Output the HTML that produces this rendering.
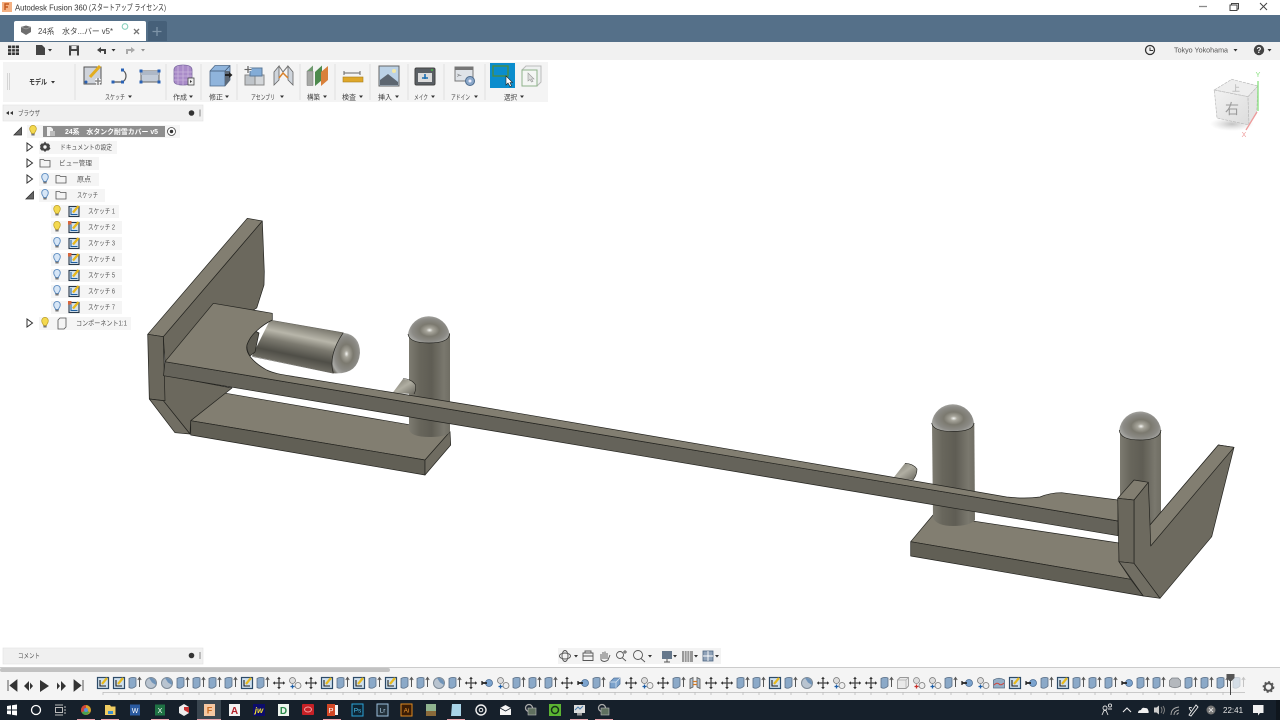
<!DOCTYPE html>
<html><head><meta charset="utf-8"><style>
html,body{margin:0;padding:0;background:#fff;width:1280px;height:720px;overflow:hidden}
svg{display:block;filter:blur(.3px)}
text{font-family:"Liberation Sans","Noto Sans CJK JP",sans-serif}
.l{font-size:7px;fill:#444}
.b{font-size:7px;fill:#555}
</style></head><body>
<svg width="1280" height="720" viewBox="0 0 1280 720" xmlns="http://www.w3.org/2000/svg">
<defs>
<linearGradient id="cv" x1="0" x2="1" y1="0" y2="0"><stop offset="0" stop-color="#7d7b71"/><stop offset=".25" stop-color="#68665c"/><stop offset=".55" stop-color="#5f5d54"/><stop offset=".85" stop-color="#7a786e"/><stop offset="1" stop-color="#6f6d63"/></linearGradient>
<linearGradient id="ch" gradientUnits="userSpaceOnUse" x1="344" y1="331" x2="335" y2="374"><stop offset="0" stop-color="#6f6d63"/><stop offset=".32" stop-color="#b8b6aa"/><stop offset=".52" stop-color="#7c7a70"/><stop offset=".78" stop-color="#4f4e47"/><stop offset="1" stop-color="#706e65"/></linearGradient>
<linearGradient id="pg" x1="0" y1="0" x2="1" y2="1"><stop offset="0" stop-color="#77756b"/><stop offset=".5" stop-color="#b0aea2"/><stop offset="1" stop-color="#68665d"/></linearGradient>
<radialGradient id="dome" cx=".52" cy=".52" r=".62"><stop offset="0" stop-color="#f6f6f3"/><stop offset=".13" stop-color="#a8a69c"/><stop offset=".38" stop-color="#7b796f"/><stop offset=".68" stop-color="#8c8b86"/><stop offset=".88" stop-color="#aaaaa6"/><stop offset="1" stop-color="#6c6a62"/></radialGradient>
<linearGradient id="cube" x1="0" y1="0" x2="1" y2="1"><stop offset="0" stop-color="#f2f2f2"/><stop offset="1" stop-color="#dcdcdc"/></linearGradient>
<radialGradient id="shad"><stop offset="0" stop-color="#999" stop-opacity=".6"/><stop offset="1" stop-color="#bbb" stop-opacity="0"/></radialGradient>

<g id="S"><rect x="-5.500" y="-5.500" width="11" height="11" fill="#cfe0ee" stroke="#2d4b68" stroke-width="1.200"/><path d="M-3-3V3H3" fill="none" stroke="#222" stroke-width="1.100"/><path d="M-1 1L4-5" stroke="#e8b91c" stroke-width="2.200"/></g>
<g id="E"><path d="M-6-4.500Q-2.500-6.500 1-5V3Q-2.500 6.500-6 4.500Z" fill="#8ba9c8" stroke="#5b6f86" stroke-width=".8"/><path d="M4.500 4V-5M2.800-3L4.500-5.500 6.200-3" fill="none" stroke="#555" stroke-width="1"/></g>
<g id="R"><circle r="5.500" fill="#b9c4d0" stroke="#7e8a96"/><path d="M-2-5A6 6 0 0 1 5 2L1-.5Z" fill="#6f93b8"/></g>
<g id="M"><path d="M0-5.500V5.500M-5.500 0H5.500" stroke="#444" stroke-width="1.300"/><path d="M-1.800-4L0-6.200 1.800-4ZM-1.800 4L0 6.200 1.800 4ZM-4-1.800L-6.200 0-4 1.800ZM4-1.800L6.200 0 4 1.800Z" fill="#333"/></g>
<g id="J"><circle cx="-2.500" cy="-2.500" r="3" fill="#ddd" stroke="#777" stroke-width=".8"/><circle cx="3" cy="2.500" r="3" fill="#eee" stroke="#777" stroke-width=".8"/><path d="M-2.500 1.500V5.500M-4.500 3.500H-.5" stroke="#1f5fa8" stroke-width="1.300"/></g>
<g id="JR"><circle cx="-2.500" cy="-2.500" r="3" fill="#ddd" stroke="#888" stroke-width=".8"/><circle cx="3" cy="2.500" r="3" fill="#eee" stroke="#777" stroke-width=".8"/><path d="M-2.500 1.500V5.500M-4.500 3.500H-.5" stroke="#c8322c" stroke-width="1.300"/></g>
<g id="P"><circle cx="2" r="3.500" fill="#7ca4cf" stroke="#4a6c92" stroke-width=".8"/><path d="M-5 0H0" stroke="#222" stroke-width="1.800"/><path d="M-5-2V2" stroke="#222" stroke-width="1.300"/></g>
<g id="B"><path d="M-5-1L-1-5H5V1L1 5H-5Z" fill="#7ba2cc" stroke="#54749a" stroke-width=".8"/><path d="M-5-1H1L5-5M1-1V5" fill="none" stroke="#dde8f2" stroke-width=".7"/></g>
<g id="A"><path d="M-5-4L-2-5.500V4L-5 5.500ZM5-4L2-5.500V4L5 5.500Z" fill="#b5c2cf" stroke="#555" stroke-width=".8"/><path d="M-2-1.500H2M-2 1.500H2" stroke="#d07a26" stroke-width="1.200"/></g>
<g id="W"><path d="M-5.500-3L-3-5.500H5.500V3L3 5.500H-5.500Z" fill="#e9e9e9" stroke="#999" stroke-width=".9"/><path d="M-5.500-3H3V5.500M3-3L5.500-5.500" fill="none" stroke="#aaa" stroke-width=".7"/></g>
<g id="G"><path d="M-5.500-2.500L-3-5H3L5.500-2.500V3Q0 6.500-5.500 3Z" fill="#b4b8bd" stroke="#7b7f84" stroke-width=".8"/></g>
<g id="F"><path d="M-5.500-3Q0-6.500 5.500-3V5H-5.500Z" fill="#94aec6" stroke="#5b6f86" stroke-width=".8"/><path d="M-5 2Q-2-1 0 1T5 0" fill="none" stroke="#d0433a" stroke-width="1"/></g>

<g id="bY"><path d="M-3.200-1.500A3.300 3.300 0 1 1 3.200-1.500C3.200 0 1.600 1 1.500 2.500H-1.500C-1.600 1-3.200 0-3.200-1.500Z" fill="#f4d94f" stroke="#b99a1f" stroke-width=".7"/><rect x="-1.600" y="2.700" width="3.200" height="1.800" fill="#777"/></g>
<g id="bB"><path d="M-3.200-1.500A3.300 3.300 0 1 1 3.200-1.500C3.200 0 1.600 1 1.500 2.500H-1.500C-1.600 1-3.200 0-3.200-1.500Z" fill="#d7e6f6" stroke="#5d8cc0" stroke-width=".9"/><rect x="-1.600" y="2.700" width="3.200" height="1.800" fill="#777"/></g>
<g id="fd"><path d="M-5-3.500H-1.500L-.5-2.500H5V4H-5Z" fill="#f4f4f4" stroke="#555" stroke-width=".8"/></g>
<g id="sk"><rect x="-5" y="-4.500" width="10" height="10" fill="#d5e3ef" stroke="#27384a" stroke-width="1.100"/><path d="M-3-3V3.500H3.500" fill="none" stroke="#1f5f9f" stroke-width="1"/><path d="M-1 1.500L4.500-5" stroke="#e9b81b" stroke-width="2.300"/></g>
<g id="sk2"><use href="#sk"/><rect x="-6" y="-6" width="3.500" height="3.500" fill="#d9653a"/></g>
<path id="tr" d="M-2.500-4V4L3 0Z" fill="#fff" stroke="#333" stroke-width="1"/>
<path id="tc" d="M-4 3.500H3.500V-4Z" fill="#666" stroke="#333" stroke-width=".8"/>
<path id="car" d="M-2-1H2L0 1.500Z" fill="#333"/>
</defs>

<!-- title bar -->
<rect width="1280" height="15" fill="#fff"/>
<rect x="2" y="2" width="10" height="10" fill="#f4b183"/><path d="M5 10V4H9M5 7H8" stroke="#c4581d" stroke-width="1.400" fill="none"/>
<text x="15" y="10.500" font-size="8.300" fill="#333" textLength="72" lengthAdjust="spacingAndGlyphs">Autodesk Fusion 360</text>
<text x="89" y="10.500" font-size="8.300" fill="#333" textLength="77" lengthAdjust="spacingAndGlyphs">(スタートアップ ライセンス)</text>
<path d="M1199 6.500H1207" stroke="#8a8a8a" stroke-width="1.300"/>
<path d="M1230 5H1237V10.500H1230ZM1231.500 5V3.500H1238.500V9H1237" fill="none" stroke="#444" stroke-width="1"/>
<path d="M1260 3L1267 10M1267 3L1260 10" stroke="#444" stroke-width="1"/>

<!-- tab bar -->
<rect y="15" width="1280" height="27" fill="#557089"/>
<path d="M14 41V23Q14 21 16 21H144Q146 21 146 23V41Z" fill="#fff"/>
<path d="M148 41V23Q148 21 150 21H165Q167 21 167 23V41Z" fill="#466079"/>
<path d="M157 27V36M152.500 31.500H161.500" stroke="#7e94a8" stroke-width="1.300"/>
<path d="M21 27L26 25.500 31 27V32L26 35 21 32Z" fill="#6e6e6e"/><path d="M21 27L26 29 31 27" stroke="#a0a0a0" fill="none" stroke-width=".7"/>
<text x="38" y="34" font-size="8" fill="#444" textLength="75" lengthAdjust="spacingAndGlyphs">24系　水タ...バー v5*</text>
<circle cx="125" cy="26.500" r="2.800" fill="none" stroke="#88d0bd" stroke-width="1.100"/>
<path d="M134 29L139 34M139 29L134 34" stroke="#777" stroke-width="1.300"/>

<!-- quick access -->
<rect y="42" width="1280" height="18" fill="#f1f1f1"/>
<path d="M8 45.500H19V55H8Z" fill="#333"/><path d="M11.700 45V56M15.300 45V56M8 48.700H19M8 52H19" stroke="#f1f1f1" stroke-width=".8"/>
<path d="M36 45H42L45 48V55H36Z" fill="#444"/><use href="#car" x="50" y="50"/>
<path d="M69 45.500H79V55.500H69Z" fill="#444"/><rect x="71.500" y="46" width="5" height="3" fill="#e8e8e8"/><rect x="71" y="51" width="6" height="4.500" fill="#e8e8e8"/>
<path d="M97 50L101 47V49H106V54H104V51H101V53Z" fill="#444"/><use href="#car" x="113.500" y="50"/>
<path d="M135 50L131 47V49H126V54H128V51H131V53Z" fill="#aaa"/><use href="#car" x="143" y="50" opacity=".5"/>
<circle cx="1150" cy="50" r="4.500" fill="none" stroke="#333" stroke-width="1.300"/><path d="M1150 47.500V50.500H1153" fill="none" stroke="#333" stroke-width="1"/>
<text x="1174" y="52.500" font-size="7.300" fill="#555" textLength="54" lengthAdjust="spacingAndGlyphs">Tokyo Yokohama</text><use href="#car" x="1235.500" y="50"/>
<circle cx="1259" cy="50" r="5.200" fill="#444"/><text x="1259" y="53" font-size="8" fill="#fff" font-weight="bold" text-anchor="middle">?</text><use href="#car" x="1269.500" y="50"/>

<!-- toolbar -->
<rect x="3" y="62" width="545" height="40" fill="#f4f4f4"/>
<path d="M7.500 73V90M9.500 73V90" stroke="#ccc" stroke-width=".8"/>
<text x="29" y="84.500" font-size="7.300" fill="#333" font-weight="bold" textLength="18" lengthAdjust="spacingAndGlyphs">モデル</text><use href="#car" x="53" y="82"/>
<g stroke="#e0e0e0" stroke-width="1"><path d="M75 64V100M166 64V100M201 64V100M237 64V100M300 64V100M335 64V100M370 64V100M408 64V100M444 64V100M485 64V100"/></g>
<!-- sketch -->
<rect x="84" y="67" width="17" height="17" fill="#cfd3da" stroke="#555" stroke-width="1"/><path d="M90 77L100 66" stroke="#e3ad1f" stroke-width="3"/><circle cx="86" cy="82" r="1.500" fill="#2a62b5"/><path d="M95 81H101M98 78V85" stroke="#fff" stroke-width="3.500"/><path d="M95 81H101M98 78V85" stroke="#888" stroke-width="1.600"/>
<path d="M113 82H122A6.500 6.500 0 0 0 122 70" fill="none" stroke="#555" stroke-width="1.200"/><rect x="111.500" y="80.500" width="3" height="3" fill="#2a62b5"/><rect x="121" y="80.500" width="3" height="3" fill="#2a62b5"/><rect x="121" y="68.500" width="3" height="3" fill="#2a62b5"/>
<rect x="141" y="71" width="18" height="11" fill="#c3ccd8" stroke="#666"/><rect x="141" y="71" width="18" height="4" fill="#aeb8c6"/><rect x="139.500" y="69.500" width="3" height="3" fill="#2a62b5"/><rect x="157.500" y="69.500" width="3" height="3" fill="#2a62b5"/><rect x="139.500" y="80.500" width="3" height="3" fill="#2a62b5"/><rect x="157.500" y="80.500" width="3" height="3" fill="#2a62b5"/>
<!-- create -->
<path d="M174 70Q174 65 183 65Q192 65 192 70V81Q192 85 183 85Q174 85 174 81Z" fill="#a98bc8" stroke="#7c6aa0" stroke-width=".8"/><path d="M174 72H192M174 76H192M174 80H192M178 66V85M183 65V85M188 66V85" stroke="#c9b5dc" stroke-width=".8"/><rect x="188" y="78" width="6" height="7" fill="#eee" stroke="#444" stroke-width=".8"/><path d="M190 80L192 81.500 190 83Z" fill="#333"/>
<!-- modify -->
<path d="M210 71L215 65.500H230V80L225 86H210Z" fill="#8fb4dc" stroke="#4f6a89" stroke-width=".8"/><path d="M210 71H225V86M225 71L230 65.500" fill="none" stroke="#3d5470" stroke-width=".7"/><path d="M225 71H230V80L225 86Z" fill="#5e6a78"/><path d="M225 74H229V72L232.500 75 229 78V76H225Z" fill="#222"/>
<!-- assembly -->
<rect x="245" y="75" width="10" height="10" fill="#bfc4c9" stroke="#888"/><rect x="255" y="75" width="9" height="10" fill="#d4d7da" stroke="#888"/><rect x="250" y="68" width="12" height="8" fill="#83acd7" stroke="#5c7a99"/><path d="M248 66V73M244.500 69.500H251.500" stroke="#fff" stroke-width="3"/><path d="M248 66V73M244.500 69.500H251.500" stroke="#666" stroke-width="1.300"/>
<path d="M274 72L279 66V80L274 85ZM293 72L288 66V80L293 85Z" fill="#cfd5dc" stroke="#666" stroke-width=".8"/><path d="M279 66L283 72 288 66" fill="none" stroke="#777"/><path d="M279 78L283 73 288 78" fill="none" stroke="#d9822b" stroke-width="1.500"/>
<!-- construct -->
<path d="M307 71H313V85.500H307Z" fill="#a7a9a6" stroke="#777" stroke-width=".5"/><path d="M307 71L313 65.500V71Z" fill="#6f9a6f"/><path d="M315 72L322 65.500V80L315 86Z" fill="#4d8a4d"/><path d="M321 72L328 66V80L321 86Z" fill="#d9803a"/>
<!-- inspect -->
<path d="M344 71V75M360 71V75M344 73H360" stroke="#666" stroke-width="1"/><rect x="343" y="77" width="20" height="5" fill="#dfa72a" stroke="#a97f1c" stroke-width=".6"/>
<!-- insert -->
<rect x="379" y="66" width="20" height="20" fill="#bcd2e6" stroke="#666"/><path d="M380 85V80L388 74 398 82V85Z" fill="#5d6670"/><circle cx="394" cy="71" r="2" fill="#f2e7a6"/>
<!-- make -->
<rect x="415" y="68" width="20" height="17" rx="1.500" fill="#5a5f64" stroke="#444"/><rect x="418" y="73" width="14" height="9" fill="#dcdcdc"/><path d="M425 74V79M422 78H428" stroke="#1c6fb2" stroke-width="1.600"/><rect x="431" y="69" width="2" height="2" fill="#4aa14a"/>
<!-- addin -->
<rect x="455" y="67" width="18" height="14" fill="#dfe3e8" stroke="#777"/><rect x="455" y="67" width="18" height="3" fill="#777"/><text x="457" y="77" font-size="5" fill="#444">&gt;-</text><circle cx="470" cy="81" r="4.500" fill="#8aa7c9" stroke="#4c6a8d"/><circle cx="470" cy="81" r="1.500" fill="#eef"/>
<!-- select -->
<rect x="490" y="63" width="25" height="25" fill="#0b8dcd"/><rect x="493" y="66" width="15" height="10" fill="none" stroke="#4e8b3c" stroke-width="1.300"/><path d="M506 76V85L508 83 510 86.500 511.500 86 510 82.500H512.500Z" fill="#fff" stroke="#222" stroke-width=".6"/>
<path d="M522 70L526 66H541V82L537 86H522Z" fill="#eef0f0" stroke="#bbb"/><rect x="522" y="70" width="15" height="16" fill="#f4f6f4" stroke="#8eb28a"/><path d="M528 73V81L530 79.500 531.500 82 533 81.500 531.500 79H534Z" fill="#ddd" stroke="#999" stroke-width=".6"/>
<text class="l" x="105" y="99.500" textLength="20" lengthAdjust="spacingAndGlyphs">スケッチ</text><use href="#car" x="130" y="96.500"/>
<text class="l" x="173" y="99.500" textLength="14" lengthAdjust="spacingAndGlyphs">作成</text><use href="#car" x="191" y="96.500"/>
<text class="l" x="209" y="99.500" textLength="14" lengthAdjust="spacingAndGlyphs">修正</text><use href="#car" x="227" y="96.500"/>
<text class="l" x="251" y="99.500" textLength="24" lengthAdjust="spacingAndGlyphs">アセンブリ</text><use href="#car" x="282" y="96.500"/>
<text class="l" x="307" y="99.500" textLength="13" lengthAdjust="spacingAndGlyphs">構築</text><use href="#car" x="325" y="96.500"/>
<text class="l" x="342" y="99.500" textLength="14" lengthAdjust="spacingAndGlyphs">検査</text><use href="#car" x="361" y="96.500"/>
<text class="l" x="378" y="99.500" textLength="14" lengthAdjust="spacingAndGlyphs">挿入</text><use href="#car" x="397" y="96.500"/>
<text class="l" x="414" y="99.500" textLength="14" lengthAdjust="spacingAndGlyphs">メイク</text><use href="#car" x="433" y="96.500"/>
<text class="l" x="451" y="99.500" textLength="19" lengthAdjust="spacingAndGlyphs">アドイン</text><use href="#car" x="476" y="96.500"/>
<text class="l" x="504" y="99.500" textLength="13" lengthAdjust="spacingAndGlyphs">選択</text><use href="#car" x="522" y="96.500"/>

<!-- browser header -->
<rect x="3" y="105" width="200" height="16" fill="#f0f0f0" stroke="#e2e2e2" stroke-width=".6"/>
<path d="M9 111V115L6 113ZM13 111V115L10 113Z" fill="#333"/>
<text class="b" x="18" y="115.500" textLength="22" lengthAdjust="spacingAndGlyphs">ブラウザ</text>
<circle cx="191.500" cy="113" r="2.800" fill="#333"/><path d="M200 109.500V116.500" stroke="#bbb" stroke-width="2"/>

<!-- browser tree -->
<g fill="#f5f5f5">
<rect x="27" y="125" width="153" height="13"/><rect x="39" y="141" width="78" height="13"/><rect x="39" y="157" width="60" height="13"/><rect x="39" y="173" width="60" height="13"/><rect x="39" y="189" width="66" height="13"/>
<rect x="51" y="205" width="68" height="13"/><rect x="51" y="221" width="71" height="13"/><rect x="51" y="237" width="71" height="13"/><rect x="51" y="253" width="71" height="13"/><rect x="51" y="269" width="71" height="13"/><rect x="51" y="285" width="71" height="13"/><rect x="51" y="301" width="71" height="13"/><rect x="39" y="317" width="92" height="13"/>
</g>
<use href="#tc" x="18" y="131.500"/><use href="#bY" x="33" y="131"/>
<rect x="43" y="126" width="122" height="11" fill="#8e8e8e"/><path d="M47 127H51L53 129V136H47Z" fill="#f0f0f0"/><rect x="50" y="131" width="5" height="5" fill="#bbb"/>
<text x="65" y="134" font-size="7" fill="#fff" font-weight="bold" textLength="93" lengthAdjust="spacingAndGlyphs">24系　水タンク耐雪カバー v5</text>
<circle cx="171.500" cy="131.500" r="4" fill="#fff" stroke="#444" stroke-width=".8"/><circle cx="171.500" cy="131.500" r="1.700" fill="#333"/>

<use href="#tr" x="29.500" y="147"/>
<path d="M45 141.500L46.500 143.500H48.500L50 145.500 49.500 147 50.500 148.500 48.500 150.500H46.500L45 152 43.500 150.500H41.500L40 148.500 40.500 147 40 145.500 41.500 143.500H43.500Z" fill="#444"/><circle cx="45" cy="147" r="1.700" fill="#f5f5f5"/>
<text class="b" x="60" y="149.500" textLength="52" lengthAdjust="spacingAndGlyphs">ドキュメントの設定</text>
<use href="#tr" x="29.500" y="163"/><use href="#fd" x="45" y="163"/><text class="b" x="59" y="165.500" textLength="33" lengthAdjust="spacingAndGlyphs">ビュー管理</text>
<use href="#tr" x="29.500" y="179"/><use href="#bB" x="45" y="179"/><use href="#fd" x="61" y="179"/><text class="b" x="77" y="181.500" textLength="14" lengthAdjust="spacingAndGlyphs">原点</text>
<use href="#tc" x="30" y="195.500"/><use href="#bB" x="45" y="195"/><use href="#fd" x="61" y="195"/><text class="b" x="77" y="197.500" textLength="21" lengthAdjust="spacingAndGlyphs">スケッチ</text>
<use href="#bY" x="57" y="211"/><use href="#sk" x="74" y="211"/><text class="b" x="88" y="213.500" textLength="27" lengthAdjust="spacingAndGlyphs">スケッチ 1</text>
<use href="#bY" x="57" y="227"/><use href="#sk2" x="74" y="227"/><text class="b" x="88" y="229.500" textLength="27" lengthAdjust="spacingAndGlyphs">スケッチ 2</text>
<use href="#bB" x="57" y="243"/><use href="#sk" x="74" y="243"/><text class="b" x="88" y="245.500" textLength="27" lengthAdjust="spacingAndGlyphs">スケッチ 3</text>
<use href="#bB" x="57" y="259"/><use href="#sk2" x="74" y="259"/><text class="b" x="88" y="261.500" textLength="27" lengthAdjust="spacingAndGlyphs">スケッチ 4</text>
<use href="#bB" x="57" y="275"/><use href="#sk" x="74" y="275"/><text class="b" x="88" y="277.500" textLength="27" lengthAdjust="spacingAndGlyphs">スケッチ 5</text>
<use href="#bB" x="57" y="291"/><use href="#sk" x="74" y="291"/><text class="b" x="88" y="293.500" textLength="27" lengthAdjust="spacingAndGlyphs">スケッチ 6</text>
<use href="#bB" x="57" y="307"/><use href="#sk2" x="74" y="307"/><text class="b" x="88" y="309.500" textLength="27" lengthAdjust="spacingAndGlyphs">スケッチ 7</text>
<use href="#tr" x="29.500" y="323"/><use href="#bY" x="45" y="323"/>
<path d="M58 320L60 318H66V327L64 329H58Z" fill="#f4f4f4" stroke="#555" stroke-width=".8"/>
<text class="b" x="76" y="325.500" textLength="51" lengthAdjust="spacingAndGlyphs">コンポーネント1:1</text>

<!-- MODEL -->
<g stroke="#23231f" stroke-width=".7" stroke-linejoin="round">
<!-- lower plates -->
<path d="M190.700 420.700L216.700 391.700 450 431.700 425 460Z" fill="#827e71"/>
<path d="M190.700 420.700L425 460 425 475 190.700 435Z" fill="#615f55"/>
<path d="M425 460L450 431.700 450.700 445 425 475Z" fill="#6f6c61"/>
<path d="M910.700 541.700L933 515 1119 543 1119 561.700 1130.700 579.300Z" fill="#827e71"/>
<path d="M910.700 541.700L1130.700 579.300 1143.300 596 910.700 556Z" fill="#615f55"/>
<!-- vertical capsules -->
<path d="M409 333V429Q410 437 430 437Q449 437 450 431V333Z" fill="url(#cv)" stroke="none"/>
<path d="M408 334A21 21 0 0 1 449.500 334Q449 343 429 343Q409 343 408 334Z" fill="url(#dome)" stroke="none"/>
<path d="M408 334Q409 343 429 343Q449 343 449.500 334" fill="none"/>
<path d="M932 423H974.300L975 520Q970 526 953 526Q937 526 933 518Z" fill="url(#cv)" stroke="none"/>
<path d="M931.700 423A21.300 21.300 0 0 1 974 423Q973 431.500 953 431.500Q933 431.500 931.700 423Z" fill="url(#dome)" stroke="none"/>
<path d="M931.700 423Q933 431.500 953 431.500Q973 431.500 974 423" fill="none"/>
<path d="M1120 430H1161V525H1120Z" fill="url(#cv)" stroke="none"/>
<path d="M1119.300 430A21 21 0 0 1 1161 430Q1160 440 1140 440Q1120 440 1119.300 430Z" fill="url(#dome)" stroke="none"/>
<path d="M1119.300 430Q1120 440 1140 440Q1160 440 1161 430" fill="none"/>
<!-- pegs -->
<path d="M392.500 393L403 379Q410 379 415.500 385 416 391 414 394Z" fill="url(#pg)" stroke="none"/>
<path d="M403 378.500Q412 379 415.500 385 416 391 414 394" fill="none" stroke-width=".6"/>
<path d="M893.300 478L905 463.300Q913 463.500 917 469 917 475 913 480Z" fill="url(#pg)" stroke="none"/>
<path d="M905 463.300Q913 463.500 917 469 917 475 913 480" fill="none" stroke-width=".6"/>
<!-- horizontal capsule -->
<path d="M270 320L343.300 332.700L333.300 373.300L252 356Z" fill="url(#ch)" stroke="none"/>
<path d="M270 320L343.300 332.700M252 356.500L333.300 373.300" fill="none" stroke="#45443d" stroke-width=".4"/>
<path d="M343.300 332.700Q360 335 360 353Q358 375 333.300 373.300Q328 355 343.300 332.700Z" fill="url(#dome)" stroke="none"/>
<path d="M343.300 332.700Q328 355 333.300 373.300" fill="none"/>
<!-- inside below bar -->
<path d="M163 375L232 388 190.700 420.700 190 434 163.300 400.700Z" fill="#6b685d"/>
<!-- upright plate -->
<path d="M262.300 221L264.300 271.700 264 285 256.700 308 165 361.700 163.300 336.700Z" fill="#6b685d"/>
<path d="M247.300 218.300L262.300 221 163.300 336.700 147.700 334.300Z" fill="#827e71"/>
<path d="M147.700 334.300L163.300 336.700 165 400.700 149.300 399Z" fill="#6a675c"/>
<path d="M149.300 399L163.300 400.700 190 434 175 432.700Z" fill="#716e63"/>
<!-- bar front (single piece) -->
<path d="M165 361.700L1118 521 1118 535.700 163.500 375.700Z" fill="#65635a"/>
<!-- bar/plate top (single piece) -->
<path d="M165 361.700L213.300 303.300 272.300 313.300 272.300 320C262 325 250 335 247 345 245 352 252 362 266.700 370 275 374 285 375 296.700 377L470 405 880 475 1006.700 497Q1025 499 1040 497 1050 492.700 1061.700 492.700L1118 500 1118 521Z" fill="#827e71"/>
<path d="M247 345C249 339 252 335 256 331.500L259 333 255 352 250 356C247.500 352 246.500 349 247 345Z" fill="#5d5b52"/>
<!-- right upright -->
<path d="M1134 500L1148.300 482.300 1150 525 1218.300 445 1234 447.300 1211.700 536.700 1160 598.300 1134 563.300Z" fill="#6d6a5f"/>
<path d="M1150 525L1218.300 445 1234 447.300 1150.700 546Z" fill="#827e71"/>
<path d="M1117.700 498.300L1134 480 1148.300 482.300 1134 500Z" fill="#827e71"/>
<path d="M1117.700 498.300L1134 500 1134 563.300 1119 561.700Z" fill="#6a675c"/>
<path d="M1119 561.700L1134 563.300 1160 598.300 1143.300 596Z" fill="#716e63"/>
</g>

<!-- nav cube -->
<ellipse cx="1232" cy="124" rx="22" ry="7" fill="url(#shad)"/>
<path d="M1214.300 90L1231.700 79.300 1258 86 1248 96.700Z" fill="#eee" stroke="#bbb" stroke-dasharray="3 1" stroke-width=".7"/>
<path d="M1214.300 90L1248 96.700 1249 125 1217 118Z" fill="url(#cube)" stroke="#bbb" stroke-dasharray="3 1" stroke-width=".7"/>
<path d="M1248 96.700L1258 86 1256.700 111.700 1249 125Z" fill="#e4e4e4" stroke="#bbb" stroke-dasharray="3 1" stroke-width=".7"/>
<text x="1232" y="114" font-size="14" fill="#999" text-anchor="middle">右</text>
<text x="1236" y="91" font-size="8" fill="#aaa" text-anchor="middle">上</text>
<path d="M1258 81V111" stroke="#86e07c" stroke-width="1.300"/><path d="M1257 112L1246 130" stroke="#ee9a9a" stroke-width="1.300"/>
<text x="1258" y="77" font-size="7" fill="#86e07c" text-anchor="middle">Y</text><text x="1244" y="137" font-size="7" fill="#ee9a9a" text-anchor="middle">X</text>

<!-- comment -->
<rect x="3" y="648" width="200" height="16" fill="#f0f0f0" stroke="#e2e2e2" stroke-width=".6"/>
<text class="b" x="18" y="658" textLength="22" lengthAdjust="spacingAndGlyphs">コメント</text>
<circle cx="191.500" cy="655.500" r="2.800" fill="#333"/><path d="M200 652V659" stroke="#bbb" stroke-width="2"/>

<!-- view bar -->
<rect x="558" y="648" width="163" height="16" fill="#f3f3f3"/>
<g fill="none" stroke="#555" stroke-width=".9">
<ellipse cx="565" cy="656" rx="5.500" ry="3"/><ellipse cx="565" cy="656" rx="3" ry="5.500"/>
<path d="M583 653H593V660.500H583ZM585 653V651H591V653M583 656H593"/>
<path d="M601 660V654M603 659V652M605 659V651.500M607 659V653M601 660Q604 663 608 660L610 655"/>
<circle cx="620" cy="655" r="3.500"/><path d="M622.500 658L626 661M625 650V654M623 652H627"/>
<circle cx="638" cy="655" r="4.500"/><path d="M641 658.500L645 662"/>
</g>
<use href="#car" x="576" y="656"/><use href="#car" x="650" y="656"/>
<rect x="662" y="651" width="10" height="8" fill="#66788c"/><path d="M667 659V662M664 662H670" stroke="#555" stroke-width="1"/><use href="#car" x="675" y="656"/>
<rect x="682" y="651" width="11" height="11" fill="#999"/><path d="M684.500 651V662M687 651V662M689.500 651V662" stroke="#eee" stroke-width=".7"/><use href="#car" x="696" y="656"/>
<rect x="703" y="651" width="10" height="10" fill="#8fa2b8" stroke="#4c6581" stroke-width=".8"/><path d="M708 651V661M703 656H713" stroke="#fff" stroke-width=".9"/><use href="#car" x="717" y="656"/>

<!-- timeline -->
<rect y="667" width="1280" height="33" fill="#f4f4f4"/>
<path d="M0 667.500H1280" stroke="#ccc" stroke-width="1"/>
<rect y="668" width="390" height="4" rx="2" fill="#c2c2c2"/>
<path d="M8 680V691M10 685.500L17 680V691Z" fill="#333" stroke="#333" stroke-width=".8"/>
<path d="M24 686L29 681V691ZM30 682.500V689.500L33 686Z" fill="#333"/>
<path d="M40 680V692L49 686Z" fill="#333"/>
<path d="M57 682.500V689.500L60 686ZM61 681V691L66 686Z" fill="#333"/>
<path d="M74 680L81 685.500 74 691ZM83 680V691" fill="#333" stroke="#333" stroke-width=".8"/>
<path d="M103 692.500H1245" stroke="#bbb" stroke-width=".8"/>
<path d="M103 692V695M119 692V695M135 692V695M151 692V695M167 692V695M183 692V695M199 692V695M215 692V695M231 692V695M247 692V695M263 692V695M279 692V695M295 692V695M311 692V695M327 692V695M343 692V695M359 692V695M375 692V695M391 692V695M407 692V695M423 692V695M439 692V695M455 692V695M471 692V695M487 692V695M503 692V695M519 692V695M535 692V695M551 692V695M567 692V695M583 692V695M599 692V695M615 692V695M631 692V695M647 692V695M663 692V695M679 692V695M695 692V695M711 692V695M727 692V695M743 692V695M759 692V695M775 692V695M791 692V695M807 692V695M823 692V695M839 692V695M855 692V695M871 692V695M887 692V695M903 692V695M919 692V695M935 692V695M951 692V695M967 692V695M983 692V695M999 692V695M1015 692V695M1031 692V695M1047 692V695M1063 692V695M1079 692V695M1095 692V695M1111 692V695M1127 692V695M1143 692V695M1159 692V695M1175 692V695M1191 692V695M1207 692V695M1223 692V695" stroke="#bbb" stroke-width=".8"/>
<use href="#S" x="103" y="683"/><use href="#S" x="119" y="683"/><use href="#E" x="135" y="683"/><use href="#R" x="151" y="683"/><use href="#R" x="167" y="683"/><use href="#E" x="183" y="683"/><use href="#E" x="199" y="683"/><use href="#E" x="215" y="683"/><use href="#E" x="231" y="683"/><use href="#S" x="247" y="683"/><use href="#E" x="263" y="683"/><use href="#M" x="279" y="683"/><use href="#J" x="295" y="683"/><use href="#M" x="311" y="683"/><use href="#S" x="327" y="683"/><use href="#E" x="343" y="683"/><use href="#S" x="359" y="683"/><use href="#E" x="375" y="683"/><use href="#S" x="391" y="683"/><use href="#E" x="407" y="683"/><use href="#E" x="423" y="683"/>
<use href="#R" x="439" y="683"/><use href="#E" x="455" y="683"/><use href="#M" x="471" y="683"/><use href="#P" x="487" y="683"/><use href="#J" x="503" y="683"/><use href="#E" x="519" y="683"/><use href="#E" x="535" y="683"/><use href="#E" x="551" y="683"/><use href="#M" x="567" y="683"/><use href="#P" x="583" y="683"/><use href="#E" x="599" y="683"/><use href="#B" x="615" y="683"/><use href="#M" x="631" y="683"/><use href="#J" x="647" y="683"/><use href="#M" x="663" y="683"/><use href="#E" x="679" y="683"/><use href="#A" x="695" y="683"/><use href="#M" x="711" y="683"/><use href="#M" x="727" y="683"/><use href="#E" x="743" y="683"/><use href="#E" x="759" y="683"/><use href="#S" x="775" y="683"/><use href="#E" x="791" y="683"/><use href="#R" x="807" y="683"/><use href="#M" x="823" y="683"/><use href="#J" x="839" y="683"/><use href="#M" x="855" y="683"/>
<use href="#M" x="871" y="683"/><use href="#E" x="887" y="683"/><use href="#W" x="903" y="683"/><use href="#JR" x="919" y="683"/><use href="#J" x="935" y="683"/><use href="#E" x="951" y="683"/><use href="#P" x="967" y="683"/><use href="#J" x="983" y="683"/><use href="#F" x="999" y="683"/><use href="#S" x="1015" y="683"/><use href="#P" x="1031" y="683"/><use href="#E" x="1047" y="683"/><use href="#S" x="1063" y="683"/><use href="#E" x="1079" y="683"/><use href="#E" x="1095" y="683"/><use href="#E" x="1111" y="683"/><use href="#P" x="1127" y="683"/><use href="#E" x="1143" y="683"/><use href="#E" x="1159" y="683"/><use href="#G" x="1175" y="683"/><use href="#E" x="1191" y="683"/><use href="#E" x="1207" y="683"/><use href="#E" x="1223" y="683"/><use href="#E" x="1239" y="683" opacity=".3"/>
<path d="M1226.500 674H1234.500V678L1231.500 681H1229.500L1226.500 678Z" fill="#555"/><path d="M1230.500 680V695" stroke="#444" stroke-width="1"/>
<circle cx="1268.500" cy="687" r="3.800" fill="none" stroke="#555" stroke-width="2"/><circle cx="1268.500" cy="687" r="5.200" fill="none" stroke="#555" stroke-width="1.300" stroke-dasharray="2 2"/>

<!-- taskbar -->
<rect y="700" width="1280" height="20" fill="#16202b"/>
<rect x="197" y="700" width="24" height="20" fill="#3a4650"/>
<path d="M7 706L11 705.400V709.500H7ZM12 705.300L17 704.500V709.500H12ZM7 710.500H11V714.500L7 714ZM12 710.500H17V715.500L12 714.700Z" fill="#fff"/>
<circle cx="36" cy="710" r="4.500" fill="none" stroke="#fff" stroke-width="1.300"/>
<path d="M55 705H63M55 715H63M55.500 707.500H62.500V712.500H55.500Z" fill="none" stroke="#bbb" stroke-width="1"/><path d="M65 706V714" stroke="#bbb" stroke-width="1" stroke-dasharray="2 1"/>
<circle cx="86" cy="710" r="5" fill="#d9a02a"/><path d="M86 705A5 5 0 0 0 81.700 712.500L86 710Z" fill="#d0433a"/><path d="M86 715A5 5 0 0 1 81.700 712.500L86 710 90 712.500Z" fill="#4ba04f"/><circle cx="86" cy="710" r="2" fill="#5a8fd8"/>
<path d="M105 705H110L111 706.500H115.500V715H105Z" fill="#f1cd62"/><rect x="108" y="711" width="5" height="3" fill="#3d8fd0"/>
<rect x="130" y="704.500" width="10" height="11" fill="#2a5aa0"/><text x="135" y="713" font-size="7" fill="#fff" text-anchor="middle">W</text>
<rect x="155" y="704.500" width="10" height="11" fill="#1f7244"/><text x="160" y="713" font-size="7" fill="#fff" text-anchor="middle">X</text>
<path d="M184 704L189 707V713L184 716 179 713V707Z" fill="#eee"/><path d="M184 707L189 707V713L184 710Z" fill="#c53030"/>
<rect x="204" y="704" width="11" height="12" fill="#f6c8a2"/><text x="209.500" y="713.500" font-size="9" font-weight="bold" fill="#c96a1f" text-anchor="middle">F</text>
<rect x="229" y="704" width="11" height="12" fill="#f2f2f2"/><text x="234.500" y="714" font-size="10" font-weight="bold" fill="#b3202a" text-anchor="middle">A</text>
<rect x="253" y="704" width="12" height="12" fill="#0c0c6a"/><text x="259" y="713" font-size="8" font-style="italic" font-weight="bold" fill="#f0e030" text-anchor="middle">jw</text>
<rect x="278" y="704" width="11" height="12" fill="#eef5ee"/><text x="283.500" y="714" font-size="10" font-weight="bold" fill="#2a8a4a" text-anchor="middle">D</text>
<rect x="302" y="704" width="12" height="11" rx="1" fill="#c62026"/><ellipse cx="308" cy="709.500" rx="3.500" ry="2.500" fill="none" stroke="#f0a0a0"/>
<rect x="329" y="705" width="9" height="10" fill="#f4f4f4"/><rect x="327" y="704" width="8" height="12" fill="#d24726"/><text x="331" y="713" font-size="7.500" fill="#fff" text-anchor="middle">P</text>
<rect x="352" y="704" width="11" height="12" fill="#0d2433" stroke="#2aa4d8"/><text x="357.500" y="712.500" font-size="6.500" fill="#4ac0ee" text-anchor="middle">Ps</text>
<rect x="377" y="704" width="11" height="12" fill="#22303a" stroke="#9cc0dc"/><text x="382.500" y="712.500" font-size="6.500" fill="#b5d4ea" text-anchor="middle">Lr</text>
<rect x="401" y="704" width="11" height="12" fill="#3a1c05" stroke="#e08a20"/><text x="406.500" y="712.500" font-size="6.500" fill="#f09a30" text-anchor="middle">Ai</text>
<rect x="426" y="704" width="10" height="12" fill="#8fb38f"/><rect x="426" y="711" width="10" height="5" fill="#8a6a3a"/>
<path d="M452 704H461V716H451Z" fill="#a9d4e8"/>
<circle cx="481" cy="710" r="5" fill="none" stroke="#f0f0f0" stroke-width="1.400"/><circle cx="481" cy="710" r="1.800" fill="none" stroke="#f0f0f0"/>
<path d="M500 708L505.500 705 511 708V715H500Z" fill="#f4f4f4"/><path d="M500 708L505.500 711 511 708" fill="none" stroke="#16202b" stroke-width=".8"/>
<circle cx="529" cy="708" r="3.500" fill="none" stroke="#aaa" stroke-width="1.300"/><rect x="528" y="708" width="8" height="7" fill="#5f6f5f" stroke="#bbb" stroke-width=".6"/>
<rect x="549" y="704" width="12" height="12" fill="#5cb532"/><circle cx="555" cy="710" r="3.500" fill="none" stroke="#16301a" stroke-width="1.500"/>
<rect x="574" y="705" width="11" height="8" fill="#dcdcdc"/><path d="M575 710L578 707 580 709 583 706" stroke="#4a7fb0" fill="none"/><rect x="577" y="713" width="5" height="2.500" fill="#999"/>
<circle cx="602" cy="708" r="3.500" fill="none" stroke="#aaa" stroke-width="1.300"/><rect x="601" y="708" width="8" height="7" fill="#5f6f5f" stroke="#bbb" stroke-width=".6"/>
<g fill="#e9a3ac"><rect x="77" y="719" width="18" height="1"/><rect x="101" y="719" width="18" height="1"/><rect x="151" y="719" width="18" height="1"/><rect x="197" y="719" width="24" height="1"/><rect x="323" y="719" width="18" height="1"/><rect x="447" y="719" width="18" height="1"/><rect x="570" y="719" width="18" height="1"/><rect x="595" y="719" width="18" height="1"/></g>
<!-- tray -->
<g fill="none" stroke="#ddd" stroke-width=".9">
<circle cx="1105" cy="708" r="2"/><circle cx="1110" cy="705.500" r="1.600"/><path d="M1102 715L1104 710.500H1106L1108 715M1108 709H1112"/>
<path d="M1123 712L1127 708 1131 712" stroke="#eee" stroke-width="1.100"/>
<path d="M1161 707Q1163 710 1161 713M1163 706Q1166 710 1163 714" stroke="#888"/>
<path d="M1171 715Q1171 708 1179 707M1174 715Q1174 711 1179 710M1177 715Q1177 713 1179 713" stroke="#aaa"/>
<path d="M1189 715L1196 705 1198 707 1191 716ZM1192 708Q1187 706 1191 711" stroke="#eee"/>
</g>
<path d="M1138 713Q1138 710 1141 710 1142 707 1145 708 1148 708 1148 710 1149 711 1148.500 713Z" fill="#f0f0f0"/>
<path d="M1154 707.500H1156.500L1159 705.500V714.500L1156.500 712.500H1154Z" fill="#ccc"/>
<circle cx="1211" cy="710" r="4.500" fill="#777"/><path d="M1209 708L1213 712M1213 708L1209 712" stroke="#ddd" stroke-width="1"/>
<text x="1223" y="713" font-size="8" fill="#e4e4e4">22:41</text>
<path d="M1253 705H1263.500V713H1260L1258 715.500V713H1253Z" fill="#f0f0f0"/>
<rect x="1276" y="700" width="4" height="20" fill="#0f161d"/>
</svg>
</body></html>
